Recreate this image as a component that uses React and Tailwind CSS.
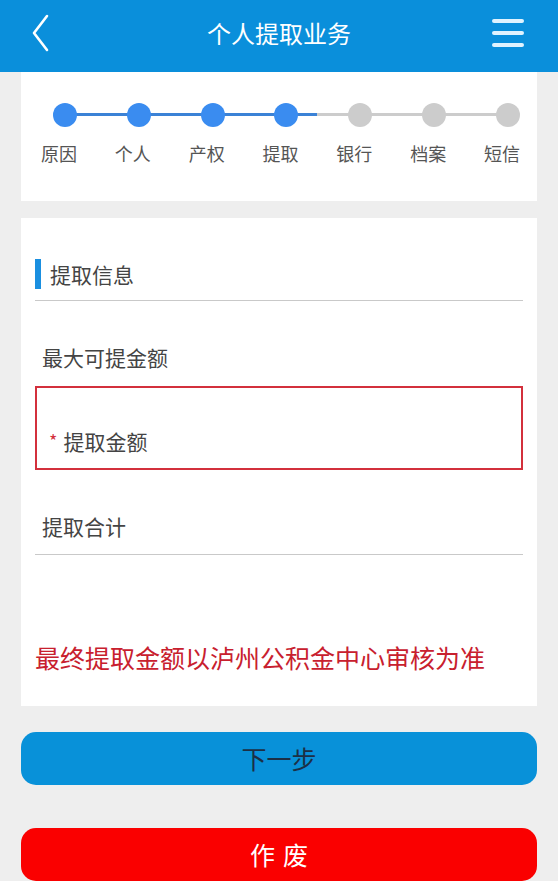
import React from 'react'

const steps = ['原因', '个人', '产权', '提取', '银行', '档案', '短信']
const current = 3

const Header = () => (
    <div className="h-[72px] bg-[#0a8fdb] flex items-center justify-between pl-[31px] pr-[34px] pb-[6px] relative">
        <svg width="18" height="38" viewBox="0 0 18 38" fill="none">
            <path d="M16 2 L3 19 L16 36" stroke="#ffffff" strokeWidth="2.6" strokeLinecap="round" strokeLinejoin="round" />
        </svg>
        <h1 className="absolute left-0 right-0 text-center text-[24px] leading-none text-white pointer-events-none">个人提取业务</h1>
        <div className="flex flex-col gap-[8px]">
            <span className="block w-[32px] h-[4px] rounded-full bg-[#dff3ff]" />
            <span className="block w-[32px] h-[4px] rounded-full bg-[#dff3ff]" />
            <span className="block w-[32px] h-[4px] rounded-full bg-[#dff3ff]" />
        </div>
    </div>
)

const Stepper = () => (
    <div className="bg-white h-[129px] pl-[27px] pr-[12px] pt-[31px]">
        <div className="relative">
            {/* track behind the dots */}
            <div className="absolute left-[17px] right-[17px] top-[10px] h-[3px] bg-[#cccccc]" />
            <div className="absolute left-[17px] w-[252px] top-[10px] h-[3px] bg-[#3b82d6]" />
            <div className="relative flex justify-between">
                {steps.map((label, i) => (
                    <div key={label} className="w-[34px] flex flex-col items-center">
                        <div className={`w-[24px] h-[24px] rounded-full ${i <= current ? 'bg-[#3a8cf0]' : 'bg-[#cccccc]'}`} />
                        <span className="mt-[17px] mr-[12px] text-[18px] leading-none text-[#555555] whitespace-nowrap">{label}</span>
                    </div>
                ))}
            </div>
        </div>
    </div>
)

const FormCard = () => (
    <div className="bg-white mt-[17px] h-[488px] px-[14px] pt-[41px]">
        <div className="h-[42px] border-b border-[#c9c9c9] flex items-start">
            <span className="w-[6px] h-[30px] bg-[#1a8fe0]" />
            <span className="ml-[9px] h-[30px] flex items-center text-[21px] leading-none text-[#444444]">提取信息</span>
        </div>
        <div className="h-[85px] flex items-center pl-[7px] pt-[27px] text-[21px] leading-none text-[#444444]">
            最大可提金额
        </div>
        <div className="h-[84px] border-2 border-[#d3303c] flex items-end pb-[16px] pl-[12px]">
            <span className="text-[18px] leading-none text-[#d3303c] mb-[3px]">*</span>
            <span className="ml-[6px] text-[21px] leading-none text-[#444444]">提取金额</span>
        </div>
        <div className="h-[85px] border-b border-[#c9c9c9] flex items-center pl-[7px] pt-[29px] text-[21px] leading-none text-[#444444]">
            提取合计
        </div>
        <div className="pt-[90px] text-[25px] leading-none text-[#c8202e] whitespace-nowrap">
            最终提取金额以泸州公积金中心审核为准
        </div>
    </div>
)

export default function App() {
    return (
        <div
            className="w-[558px] h-[881px] bg-[#eeeeee] overflow-hidden"
            style={{ fontFamily: '"Noto Sans CJK SC", "Noto Sans", sans-serif' }}
        >
            <Header />
            <div className="px-[21px]">
                <Stepper />
                <FormCard />
                <button className="mt-[26px] w-full h-[53px] rounded-[15px] bg-[#0891d9] text-[25px] leading-none text-[#1c2f45]">
                    下一步
                </button>
                <button className="mt-[43px] w-full h-[53px] rounded-[15px] bg-[#fa0000] text-[25px] leading-none text-white tracking-[8px] pl-[8px]">
                    作废
                </button>
            </div>
        </div>
    )
}
